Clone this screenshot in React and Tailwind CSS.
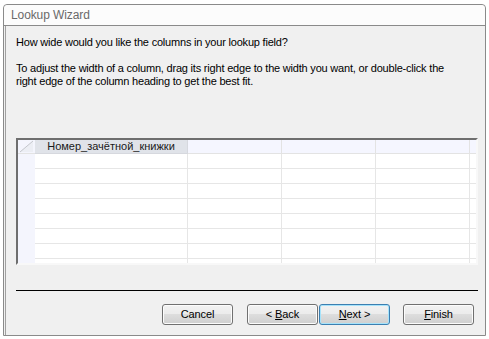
import React from 'react';

const cols = [153, 94, 94, 94, 6];

const Row = ({ last }) => (
  <div className={`flex ${last ? 'h-[4px]' : 'h-[15px]'}`}>
    <div className="w-[17px] shrink-0 bg-[#f4f5fd]" />
    {cols.map((w, i) => (
      <div
        key={i}
        style={{ width: w }}
        className={`shrink-0 bg-white ${last ? '' : 'border-b'} border-[#e6e6e6] ${i < 4 ? 'border-r' : ''}`}
      />
    ))}
  </div>
);

const Button = ({ children, primary }) => (
  <button
    className={`w-[71px] h-[21px] shrink-0 flex items-center justify-center rounded-[3px] border text-[11px] tracking-[-0.1px] text-black bg-[linear-gradient(#f2f2f2_0%,#ebebeb_50%,#dddddd_50%,#cfcfcf_100%)] ${
      primary
        ? 'border-[#3c7fb1] shadow-[inset_0_0_0_1px_#a6e3fb]'
        : 'border-[#707070] shadow-[inset_0_0_0_1px_#fcfcfc]'
    }`}
  >
    <span className="whitespace-pre">{children}</span>
  </button>
);

export default function App() {
  return (
    <div
      className="w-[489px] h-[339px] bg-white overflow-hidden pt-[4px] pl-[3px]"
      style={{ fontFamily: '"Liberation Sans", Arial, sans-serif' }}
    >
      <div className="w-[483px] h-[332px] flex flex-col border border-[#8a8a8a] rounded-t-[4px] bg-[#f0f0f0]">
        <div className="h-[21px] shrink-0 bg-[#fcfcfc] border-b border-[#8a8a8a] rounded-t-[4px] flex items-center pl-[7px] text-[12px] tracking-[-0.1px] text-[#6a6a6a]">
          Lookup Wizard
        </div>

        <div className="flex-1 flex flex-col pl-[10px] border-l border-[#a0a0a0] ml-[1px]">
          <div className="pt-[10px] text-[11px] leading-[13px] tracking-[-0.2px] text-black whitespace-nowrap">
            <p>How wide would you like the columns in your lookup field?</p>
            <p className="mt-[13px]">
              To adjust the width of a column, drag its right edge to the width you want, or double-click the
            </p>
            <p>right edge of the column heading to get the best fit.</p>
          </div>

          <div className="mt-[50px] w-[462px] h-[127px] shrink-0 border-2 border-t-[#6e6e6e] border-l-[#6e6e6e] border-r-[#f8f8f8] border-b-[#f8f8f8] bg-white flex flex-col">
            <div className="flex h-[14px] shrink-0">
              <div className="w-[17px] shrink-0 bg-[#f4f5fd] border-b border-[#e3e3e3]">
                <svg width="17" height="13" viewBox="0 0 17 13">
                  <polygon points="2,12 15,1 15,12" fill="#eceef4" />
                  <line x1="2" y1="12" x2="15" y2="1" stroke="#c4c6cc" strokeWidth="1" />
                </svg>
              </div>
              <div className="w-[153px] shrink-0 bg-[#e0e3e9] border-b border-r border-[#d6d8de] flex items-center justify-center text-[11px] leading-none text-[#1a1a1a] whitespace-nowrap">
                Номер_зачётной_книжки
              </div>
              {[94, 94, 94, 6].map((w, i) => (
                <div
                  key={i}
                  style={{ width: w }}
                  className={`shrink-0 bg-[#f5f6ff] border-b border-[#e3e3e3] ${i < 3 ? 'border-r' : ''}`}
                />
              ))}
            </div>
            {[0, 1, 2, 3, 4, 5, 6].map((r) => (
              <Row key={r} />
            ))}
            <Row last />
          </div>

          <div className="mt-[25px] w-[462px] h-px shrink-0 bg-black" />

          <div className="mt-[13px] flex items-center pl-[146px]">
            <Button>Cancel</Button>
            <div className="ml-[14px] flex gap-[1px]">
              <Button>
                &lt; <span className="underline underline-offset-1">B</span>ack
              </Button>
              <Button primary>
                <span className="underline underline-offset-1">N</span>ext &gt;
              </Button>
            </div>
            <div className="ml-[13px] flex">
              <Button>
                <span className="underline underline-offset-1">F</span>inish
              </Button>
            </div>
          </div>
        </div>
      </div>
    </div>
  );
}
